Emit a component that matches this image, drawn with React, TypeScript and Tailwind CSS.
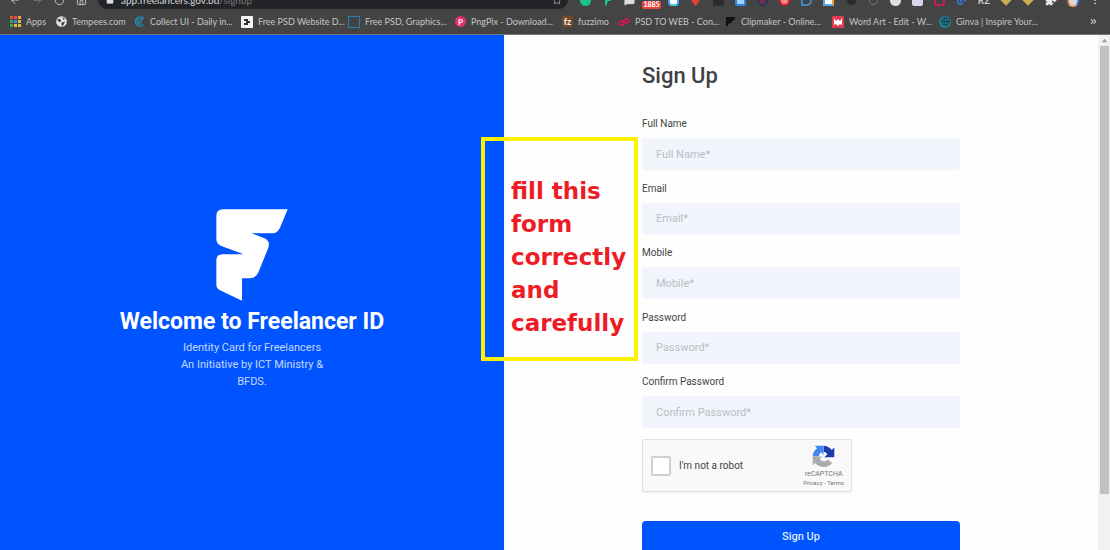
import type { ReactNode } from "react";
import {
  ArrowLeft,
  ArrowRight,
  RotateCw,
  House,
  Lock,
  Star,
  Puzzle,
  EllipsisVertical,
  Link2,
  Globe,
  ChevronsRight,
  Moon,
  MessageSquare,
  MapPin,
} from "lucide-react";

const extensions: { name: string; icon: ReactNode }[] = [
  { name: "Grammar", icon: <span className="block size-[11px] rounded-full bg-[#19c38a]" /> },
  {
    name: "Flag",
    icon: (
      <svg viewBox="0 0 11 11" className="size-[11px]">
        <path d="M3 0H9V6H6L4 11H3Z" fill="#10c98d" />
      </svg>
    ),
  },
  { name: "Chat", icon: <MessageSquare size={11} fill="#ddd" color="#ddd" /> },
  {
    name: "Mail",
    icon: (
      <span className="relative block size-[11px]">
        <span className="absolute -left-1 top-[6px] flex h-[8px] w-[19px] items-center justify-center rounded-xs bg-[#e8443c] text-[7px] font-bold leading-none text-white">
          1885
        </span>
      </span>
    ),
  },
  { name: "Lens", icon: <span className="block size-[11px] rounded-sm border-2 border-t-[#e25bd0] border-r-[#4aa3ff] border-b-[#4ccfe0] border-l-[#4aa3ff] bg-white" /> },
  { name: "Pin", icon: <MapPin size={11} fill="#e0452f" color="#e0452f" /> },
  { name: "Frame", icon: <span className="block size-[11px] rounded-xs bg-[#2c2c2c]" /> },
  { name: "Blue box", icon: <span className="block size-[11px] rounded-xs border-2 border-[#2f86e0] bg-[#a9d0f8]" /> },
  { name: "Target", icon: <span className="block size-[11px] rounded-full border-2 border-[#2b3560] bg-[#71324c]" /> },
  { name: "Stop", icon: <span className="block size-[11px] rounded-full border-2 border-[#d3202b] bg-[#ee8a8f]" /> },
  { name: "Search", icon: <span className="block size-[11px] rounded-full rounded-bl-none border-2 border-[#4485bd]" /> },
  { name: "Windows", icon: <span className="block size-[11px] border-2 border-t-[#58a8e8] border-r-[#f39b3a] border-b-[#58a8e8] border-l-[#58a8e8] bg-white" /> },
  { name: "Night", icon: <Moon size={11} fill="#2a2a2a" color="#2a2a2a" /> },
  { name: "Refresh", icon: <RotateCw size={11} color="#777" /> },
  { name: "Shield", icon: <span className="block size-[11px] rounded-full bg-[#dedede]" /> },
  { name: "Card", icon: <span className="block size-[11px] rounded-xs bg-[#d5d5ee]" /> },
  { name: "Save", icon: <span className="block size-[11px] rounded-xs border-2 border-[#c71d55]" /> },
  { name: "Link", icon: <Link2 size={12} color="#3f7be8" strokeWidth={3} className="-rotate-45" /> },
  { name: "RZ", icon: <span className="block text-[10px] font-bold leading-none text-[#c8c8c8]">RZ</span> },
  { name: "Gem", icon: <span className="block size-2 rotate-45 bg-[#c8b04e]" /> },
  { name: "Gem two", icon: <span className="block size-2 rotate-45 bg-[#c8b04e]" /> },
  { name: "Extensions", icon: <Puzzle size={12} fill="#e8e8e8" color="#e8e8e8" /> },
  { name: "Profile", icon: <span className="block size-[13px] rounded-full border-2 border-r-[#4285f4] border-b-[#e9a27a] border-l-[#d96b43] border-t-white bg-[#d9d9d9]" /> },
  { name: "Menu", icon: <EllipsisVertical size={12} color="#c8c8c8" /> },
];

function AppsIcon() {
  const colors = ["#e5533d", "#e5533d", "#e9a53a", "#3fa45b", "#4a87e0", "#e9b93a", "#3fa45b", "#e9b93a", "#e9b93a"];
  return (
    <svg viewBox="0 0 11 11" className="size-[11px]">
      {colors.map((c, i) => (
        <rect key={i} x={(i % 3) * 4} y={Math.floor(i / 3) * 4} width="3" height="3" fill={c} />
      ))}
    </svg>
  );
}

const long = "w-[107px]";

const bookmarks: { label: string; width: string; icon: ReactNode }[] = [
  { label: "Apps", width: "w-[46px]", icon: <AppsIcon /> },
  {
    label: "Tempees.com",
    width: "w-[78px]",
    icon: (
      <svg viewBox="0 0 12 12" className="size-[11px]">
        <circle cx="6" cy="6" r="5.8" fill="#e4e4e4" />
        <path d="M1 4L4 3L6 5L4 7L3 6ZM7 1L10 3L8 4ZM6 7L10 6L8 10L6 11Z" fill="#444" />
      </svg>
    ),
  },
  {
    label: "Collect UI - Daily in...",
    width: long,
    icon: (
      <svg viewBox="0 0 12 12" className="size-[11px]" fill="none" stroke="#2790bb" strokeWidth="1.3">
        <path d="M10.500 9.500A5.200 5.200 0 1 1 10.500 2.500" />
        <path d="M8.500 8A3 3 0 1 1 8.500 4L10 1M5 6L6 7L9 4" />
      </svg>
    ),
  },
  {
    label: "Free PSD Website D...",
    width: long,
    icon: (
      <svg viewBox="0 0 12 12" className="size-[12px]">
        <rect width="12" height="12" rx="1" fill="#f4f4f4" />
        <path d="M3 3H7V5H9V7H7V9H3V7H5V5H3Z" fill="#333" />
      </svg>
    ),
  },
  { label: "Free PSD, Graphics...", width: long, icon: <span className="block size-[12px] border border-[#2180b5]" /> },
  {
    label: "PngPix - Download...",
    width: long,
    icon: (
      <span className="flex size-[11px] items-center justify-center rounded-full bg-[#e8306f] text-[8px] font-bold leading-none text-white">P</span>
    ),
  },
  {
    label: "fuzzimo",
    width: "w-[56px]",
    icon: (
      <span className="flex size-[11px] items-center justify-center bg-[#71472a] text-[9px] font-bold leading-none text-white">fz</span>
    ),
  },
  {
    label: "PSD TO WEB - Con...",
    width: long,
    icon: (
      <svg viewBox="0 0 12 12" className="size-[12px]" fill="none" stroke="#c8195b" strokeWidth="1.800">
        <ellipse cx="3.500" cy="7" rx="2.500" ry="2" />
        <ellipse cx="8.500" cy="5" rx="2.500" ry="2" />
      </svg>
    ),
  },
  {
    label: "Clipmaker - Online...",
    width: long,
    icon: (
      <svg viewBox="0 0 12 12" className="size-[11px]">
        <path d="M1 1H11L10 5H8L7 8H4L3 11H1Z" fill="#111" />
      </svg>
    ),
  },
  {
    label: "Word Art - Edit - W...",
    width: long,
    icon: (
      <svg viewBox="0 0 12 12" className="size-[12px]">
        <rect width="12" height="12" rx="1" fill="#e53950" />
        <path d="M2 2L4 5L6 3L8 5L10 2V9L8 8L6 10L4 8L2 9Z" fill="#fff" />
      </svg>
    ),
  },
  {
    label: "Ginva | Inspire Your...",
    width: long,
    icon: (
      <span className="flex size-[12px] items-center justify-center rounded-full bg-[#237e91] text-[#12343d]">
        <Globe size={9} />
      </span>
    ),
  },
];

function BrowserBar() {
  return (
    <header className="shrink-0 border-b border-[#777] bg-[#444] font-[Lato,sans-serif]">
      <div className="flex h-[9px] items-end overflow-hidden">
        <div className="flex h-[18px] w-full shrink-0 items-center">
          <nav aria-label="History" className="flex w-[98px] shrink-0 items-center gap-[11px] pl-[9px] text-[#c9c9c9]">
            <button type="button" aria-label="Back"><ArrowLeft size={12} /></button>
            <button type="button" aria-label="Forward" className="text-[#777]"><ArrowRight size={11} /></button>
            <button type="button" aria-label="Reload"><RotateCw size={11} /></button>
            <button type="button" aria-label="Home"><House size={11} /></button>
          </nav>
          <div className="flex h-[18px] w-[470px] items-center rounded-full bg-[#222427] pl-2 pr-[6px] text-[10px] leading-[14px] text-[#d8d8d8]">
            <Lock size={8} fill="#ddd" className="mr-[7px]" />
            <span>app.freelancers.gov.bd<span className="text-[#777]">/signup</span></span>
            <Star size={10} className="ml-auto text-[#aaa]" />
          </div>
          <div className="flex flex-1 items-center justify-between pl-[11px] pr-[9px]">
            {extensions.map((e) => (
              <button key={e.name} type="button" aria-label={e.name} className="flex size-[12px] items-center justify-center">
                {e.icon}
              </button>
            ))}
          </div>
        </div>
      </div>
      <nav aria-label="Bookmarks" className="flex h-[25px] items-center pl-[10px] pr-[12px] text-[9px] leading-3 text-[#c4c4c4]">
        {bookmarks.map((b) => (
          <a key={b.label} href="#" className={`flex shrink-0 items-center gap-[5px] whitespace-nowrap ${b.width}`}>
            <span className="shrink-0">{b.icon}</span>
            {b.label}
          </a>
        ))}
        <button type="button" aria-label="More bookmarks" className="ml-auto"><ChevronsRight size={9} strokeWidth={3} /></button>
      </nav>
    </header>
  );
}

function Logo() {
  return (
    <svg viewBox="0 0 214 276" className="h-[92px] w-[72px]" role="img" aria-label="Freelancer ID">
      <path
        fill="#fff"
        d="M20 1H214L191 56Q183 73 168 73H105L143 87Q163 96 156 116L127 188Q119 208 100 208H77V275L11 244Q0 239 0 226V154Q0 136 18 136H82L13 110Q0 104 0 90V21Q0 1 20 1Z"
      />
    </svg>
  );
}

function Welcome() {
  return (
    <section className="flex flex-col items-center bg-[#0054ff] pt-[174px] text-center text-white">
      <Logo />
      <h1 className="mt-[6px] text-[23px] font-bold leading-[30px]">Welcome to Freelancer ID</h1>
      <p className="mt-[2px] w-[150px] text-[11px] leading-[17px] text-[#c4d8ff]">
        Identity Card for Freelancers An Initiative by ICT Ministry &amp; BFDS.
      </p>
    </section>
  );
}

const fields = [
  { id: "name", label: "Full Name", type: "text" },
  { id: "email", label: "Email", type: "email" },
  { id: "mobile", label: "Mobile", type: "tel" },
  { id: "password", label: "Password", type: "password" },
  { id: "confirm", label: "Confirm Password", type: "password" },
];

function RecaptchaMark() {
  return (
    <svg viewBox="0 0 64 64" className="size-[23px]">
      <path d="M62 31V7L55 14A30 30 0 0 0 32 2V19A14 14 0 0 1 43 26L34 34H62Z" fill="#1c3aa9" />
      <path d="M31 2H8L14 9A30 30 0 0 0 2 32H19A14 14 0 0 1 26 20L32 29Z" fill="#4285f4" />
      <path d="M2 33V57L9 50A30 30 0 0 0 56 50L44 40A14 14 0 0 1 21 38L30 32Z" fill="#ababab" />
    </svg>
  );
}

function Recaptcha() {
  return (
    <div className="mt-[11px] flex h-[53px] w-[210px] items-center rounded-xs border border-[#e0e0e0] bg-[#f9f9f9] pl-[8px] pr-[7px] shadow-xs">
      <input id="robot" type="checkbox" className="size-[20px] appearance-none rounded-xs border-2 border-[#d0d0d0] bg-white" />
      <label htmlFor="robot" className="ml-[8px] text-[10px] leading-4 text-[#444]">I'm not a robot</label>
      <div className="ml-auto flex flex-col items-center text-[#777]">
        <RecaptchaMark />
        <span className="mt-[2px] text-[7px] leading-[9px]">reCAPTCHA</span>
        <span className="text-[6px] leading-[8px]">
          <a href="#">Privacy</a> - <a href="#">Terms</a>
        </span>
      </div>
    </div>
  );
}

function SignUp() {
  return (
    <section className="bg-[#fefefe]">
      <form className="mx-auto w-full max-w-[318px] pt-[26px]" onSubmit={(e) => e.preventDefault()}>
        <h2 className="text-[22px] font-medium leading-[30px] text-[#3f4145]">Sign Up</h2>
        <div className="mt-[27px] flex h-[310px] flex-col justify-between">
          {fields.map((f) => (
            <div key={f.id} className="flex flex-col gap-[8px]">
              <label htmlFor={f.id} className="text-[10px] leading-[12px] text-[#444]">{f.label}</label>
              <input
                id={f.id}
                type={f.type}
                placeholder={`${f.label}*`}
                className="h-[32px] w-full rounded-xs bg-[#f2f5fb] px-[14px] text-[11px] text-[#444] outline-none placeholder:text-[#b9bdc5]"
              />
            </div>
          ))}
        </div>
        <Recaptcha />
        <button type="submit" className="mt-[29px] h-[33px] w-full rounded bg-[#0054ff] text-[11px] font-medium text-[#dde8ff]">
          Sign Up
        </button>
      </form>
    </section>
  );
}

export default function App() {
  return (
    <div className="relative flex h-screen flex-col overflow-hidden bg-[#fefefe] font-[Roboto,sans-serif]">
      <BrowserBar />
      <main className="flex min-h-0 flex-1">
        <div className="grid min-w-0 flex-1 grid-cols-[504fr_594fr]">
          <Welcome />
          <SignUp />
        </div>
        <div aria-hidden="true" className="flex w-[12px] shrink-0 flex-col items-center bg-[#f1f1f1]">
          <svg viewBox="0 0 10 10" className="my-px size-[9px]">
            <path d="M2 7L5 3L8 7Z" fill="#999" />
          </svg>
          <div className="h-[87%] w-[9px] bg-[#c1c1c1]" />
        </div>
      </main>
      <aside className="absolute left-[481px] top-[137px] flex h-[224px] w-[157px] items-center border-4 border-[#fff200] pl-[26px] pt-[16px]">
        <p className="w-[120px] font-['DejaVu_Sans',sans-serif] text-[23px] font-bold leading-[33px] text-[#ee1c25]">
          fill this form correctly and carefully
        </p>
      </aside>
    </div>
  );
}
